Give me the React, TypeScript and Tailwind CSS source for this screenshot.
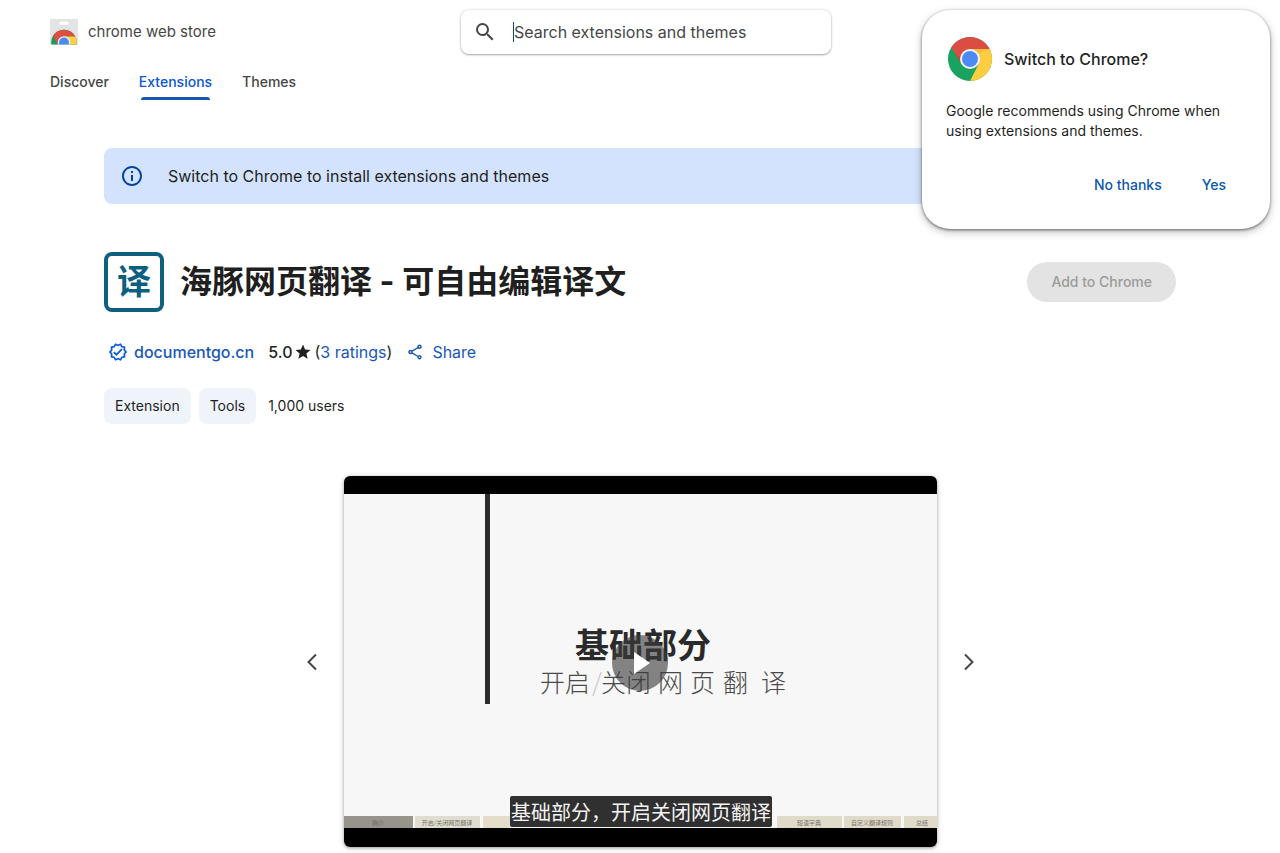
import React from "react";
import { MdInfoOutline, MdOutlineShare, MdOutlineVerified, MdSearch, MdStar } from "react-icons/md";

const tabs = [
  { label: "Discover", active: false },
  { label: "Extensions", active: true },
  { label: "Themes", active: false },
];

function StoreLogo() {
  return (
    <svg viewBox="0 0 28 26" className="h-[26px] w-7" aria-hidden="true">
      <defs>
        <clipPath id="dome">
          <path d="M0 0h28v25.500H0z" />
        </clipPath>
        <clipPath id="dome-disc">
          <circle cx="14" cy="23.500" r="12.800" />
        </clipPath>
      </defs>
      <path d="M0 0h28v24.500q0 1.500-1.500 1.500h-25q-1.500 0-1.500-1.500z" fill="#e3e4e4" />
      <rect x="9.500" y="2.500" width="9" height="3.500" rx="1.500" fill="#fff" />
      <g clipPath="url(#dome)">
        <g clipPath="url(#dome-disc)">
          <path d="M0 8h28v20H0z" fill="#1a9a5a" />
          <path d="M0 8h28v9.500H14L8.500 26.500 3.200 17 1 13z" fill="#dd4f43" />
          <path d="M14 17.500h14V28H14z" fill="#ffcd46" />
        </g>
        <circle cx="14" cy="23.500" r="6.300" fill="#f1f1f1" />
        <circle cx="14" cy="23.500" r="5" fill="#4c8bf5" />
      </g>
    </svg>
  );
}

function ChromeLogo() {
  return (
    <svg viewBox="0 0 48 48" className="size-12" aria-hidden="true">
      <defs>
        <clipPath id="disc">
          <circle cx="24" cy="24" r="22" />
        </clipPath>
      </defs>
      <g clipPath="url(#disc)">
        <path d="M0 0h48v48H0z" fill="#1aa260" />
        <path d="M24 14h24v34H23l9.700-19z" fill="#ffcd40" />
        <path d="M0 0h48v14H24L15.300 29 5 12z" fill="#db4d42" />
        <path d="M24 14h21l-12 4z" fill="#d9a23a" opacity=".35" />
        <path d="M15.300 29L9 18.500 15 23z" fill="#8c2b23" opacity=".2" />
      </g>
      <circle cx="24" cy="24" r="10" fill="#f4f4f4" />
      <circle cx="24" cy="24" r="8" fill="#4c8bf5" />
    </svg>
  );
}

function Poster() {
  return (
    <svg
      viewBox="0 0 593 371"
      className="block h-auto w-full font-['Noto_Sans_CJK_SC',sans-serif]"
      role="img"
      aria-label="基础部分"
    >
      <rect width="593" height="371" fill="#000" />
      <rect y="18" width="593" height="334" fill="#f7f7f7" />
      <rect x="141" y="18" width="5" height="210" fill="#2d2d2d" />
      <text x="231" y="182" fontSize="34" fontWeight="700" fill="#2a2a2a">基础部分</text>
      <g fontSize="25" fontWeight="300" fill="#4a4a4a">
        <text x="196" y="216">开启</text>
        <text x="248" y="216" fill="#c8c8c8">/</text>
        <text x="257" y="216">关闭</text>
        <text x="314" y="216">网</text>
        <text x="346" y="216">页</text>
        <text x="379" y="216">翻</text>
        <text x="417" y="216">译</text>
      </g>
      <rect y="340" width="69" height="12" fill="#98948b" />
      <rect x="71" y="340" width="65" height="12" fill="#e0dccf" />
      <rect x="139" y="340" width="27" height="12" fill="#e3ddca" />
      <rect x="433" y="340" width="65" height="12" fill="#e0dac9" />
      <rect x="500" y="340" width="57" height="12" fill="#e0dacb" />
      <rect x="560" y="340" width="33" height="12" fill="#e0dac9" />
      <g fontSize="6" textAnchor="middle" fill="#77736a">
        <text x="34" y="349" fill="#66625a">简介</text>
        <text x="103" y="349">开启/关闭网页翻译</text>
        <text x="465" y="349">短语字典</text>
        <text x="528" y="349">自定义翻译规则</text>
        <text x="578" y="349">总结</text>
      </g>
      <rect x="166" y="320" width="262" height="31" rx="2" fill="#303030" />
      <text x="167" y="344" fontSize="20" fill="#f4f4f4">基础部分，开启关闭网页翻译</text>
      <circle cx="296" cy="187" r="28" fill="#3c3c3c" fillOpacity=".62" />
      <path d="M290 176v22l16-11z" fill="#fff" />
    </svg>
  );
}

function Chevron({ d }: { d: string }) {
  return (
    <svg viewBox="0 0 24 24" className="size-6" fill="none" stroke="#444746" strokeWidth="2" aria-hidden="true">
      <path d={d} />
    </svg>
  );
}

export default function App() {
  return (
    <div className="relative overflow-hidden bg-white pb-1.5 font-['Inter','Noto_Sans_CJK_SC',sans-serif] text-[#1f1f1f]">
      <header>
        <div className="grid grid-cols-[1fr_370px_1fr] items-center pt-2.5 pr-[38px] pl-[50px]">
          <a href="#home" className="flex items-center gap-2.5 text-[#444746]">
            <StoreLogo />
            <span className="text-[15px] leading-6">chrome web store</span>
          </a>
          <label className="flex h-11 items-center rounded-lg bg-white pl-3 shadow-[0_1px_2px_rgba(60,64,67,.4),0_0_3px_rgba(60,64,67,.2)]">
            <MdSearch className="size-6 text-[#444746]" />
            <span className="ml-4 h-5 w-px bg-[#0b4a7a]" />
            <input
              type="text"
              aria-label="Search extensions and themes"
              placeholder="Search extensions and themes"
              className="min-w-0 flex-1 bg-transparent text-base outline-none placeholder:text-[#444746]"
            />
          </label>
        </div>
        <nav className="flex gap-[30px] px-[50px] pt-3.5 text-sm font-medium text-[#444746]">
          {tabs.map((t) => (
            <a key={t.label} href={"#" + t.label} className={t.active ? "text-[#0b57d0]" : ""}>
              <span className="block pt-0.5 pb-[3px] leading-6">{t.label}</span>
              {t.active && <span className="mx-0.5 block h-[3px] rounded-t-sm bg-[#1a56b0]" />}
            </a>
          ))}
        </nav>
      </header>

      <main className="px-[104px] pt-12">
        <div className="flex h-14 items-center gap-6 rounded-lg bg-[#d3e3fd] px-4">
          <MdInfoOutline className="size-6 text-[#0842a0]" />
          <p className="text-base">Switch to Chrome to install extensions and themes</p>
        </div>

        <section className="mt-12">
          <div className="flex items-center gap-4">
            <span className="flex size-[60px] items-center justify-center rounded-lg border-4 border-[#0e607e] text-[34px] leading-none font-bold text-[#0b5f80]">
              译
            </span>
            <h1 className="flex-1 text-[32px] leading-10 font-bold">海豚网页翻译 - 可自由编辑译文</h1>
            <button type="button" disabled className="h-10 rounded-full bg-[#e3e3e3] px-6 text-sm font-medium text-[#9a9b9a]">
              Add to Chrome
            </button>
          </div>

          <div className="mt-7 flex h-6 items-center text-base">
            <MdOutlineVerified className="mx-1 size-5 text-[#0b57d0]" />
            <a href="#publisher" className="ml-0.5 font-medium text-[#1a57b5]">documentgo.cn</a>
            <span className="ml-3.5 font-medium">5.0</span>
            <MdStar className="mx-0.5 size-[18px]" />
            <span>
              (<a href="#ratings" className="text-[#1a57b5]">3 ratings</a>)
            </span>
            <button type="button" className="ml-3.5 flex items-center gap-2 text-[#1a57b5]">
              <MdOutlineShare className="size-[18px]" />
              Share
            </button>
          </div>

          <div className="mt-6 flex items-center gap-2 text-sm">
            <a href="#extension" className="flex h-9 items-center rounded-lg bg-[#eff3fa] px-[11px]">Extension</a>
            <a href="#tools" className="flex h-9 items-center rounded-lg bg-[#eff3fa] px-[11px]">Tools</a>
            <span className="ml-1">1,000 users</span>
          </div>
        </section>

        <section className="mt-[52px] flex items-center justify-center gap-5">
          <button type="button" aria-label="Previous">
            <Chevron d="M16 4.500L8.500 12l7.500 7.500" />
          </button>
          <button
            type="button"
            aria-label="Play video"
            className="w-full max-w-[593px] overflow-hidden rounded-md shadow-[0_1px_3px_rgba(60,64,67,.4),0_1px_6px_rgba(60,64,67,.2)]"
          >
            <Poster />
          </button>
          <button type="button" aria-label="Next">
            <Chevron d="M8 4.500l7.500 7.500L8 19.500" />
          </button>
        </section>
      </main>

      <div
        role="dialog"
        aria-labelledby="switch-title"
        className="absolute top-2.5 right-2.5 w-[348px] rounded-[28px] bg-white px-6 pt-[25px] pb-6 shadow-[0_1px_3px_rgba(0,0,0,.5),0_3px_8px_rgba(0,0,0,.25)]"
      >
        <div className="flex items-center gap-2.5">
          <ChromeLogo />
          <h2 id="switch-title" className="text-base font-medium">Switch to Chrome?</h2>
        </div>
        <p className="mt-[18px] text-sm">Google recommends using Chrome when using extensions and themes.</p>
        <div className="mt-6 flex justify-end gap-4 pr-2 text-sm font-medium text-[#0b57b0]">
          <button type="button" className="h-10 px-3">No thanks</button>
          <button type="button" className="h-10 px-3">Yes</button>
        </div>
      </div>
    </div>
  );
}
